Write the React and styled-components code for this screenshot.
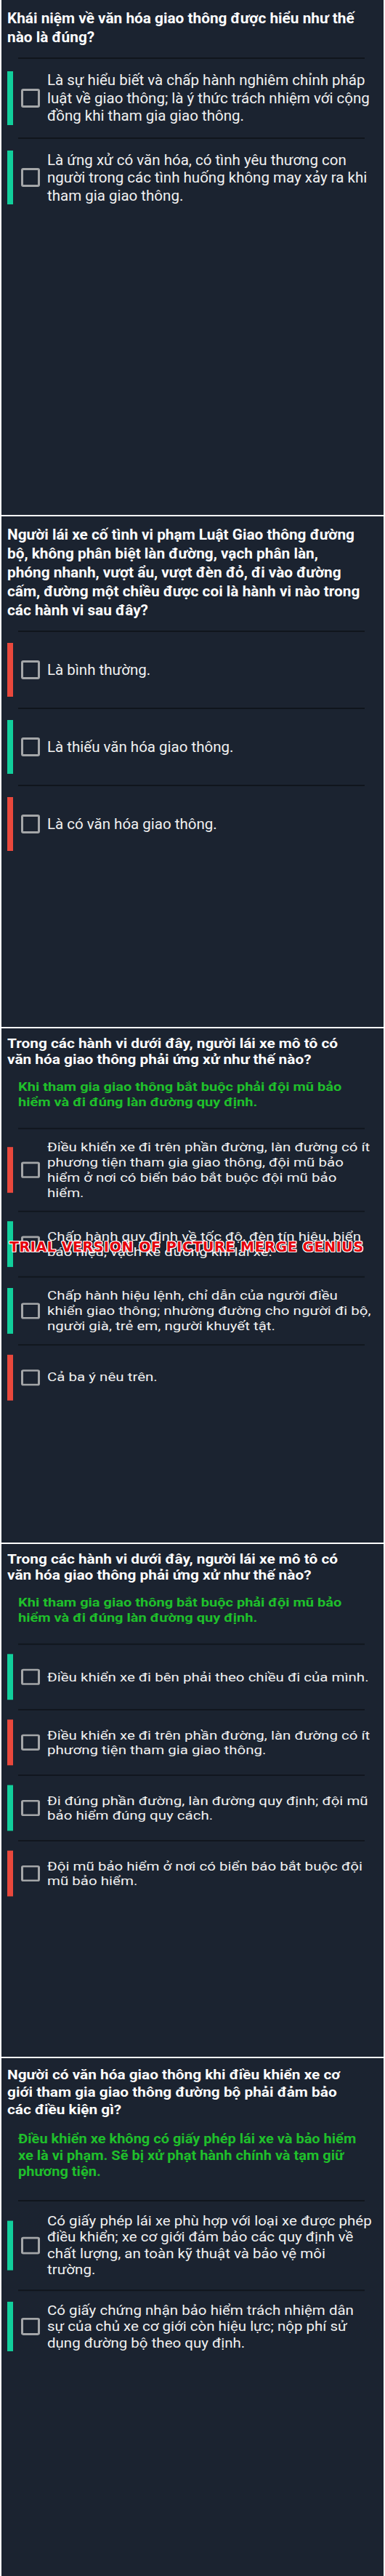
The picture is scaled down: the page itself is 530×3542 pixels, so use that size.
import React from "react";
import styled, { createGlobalStyle } from "styled-components";

const GREEN = "#11cf9b";
const RED = "#e9483c";

const panels = [
  {
    height: 708,
    scale: 1,
    question: [
      "Khái niệm về văn hóa giao thông được hiểu như thế",
      "nào là đúng?",
    ],
    options: [
      {
        ok: true,
        lines: [
          "Là sự hiểu biết và chấp hành nghiêm chỉnh pháp",
          "luật về giao thông; là ý thức trách nhiệm với cộng",
          "đồng khi tham gia giao thông.",
        ],
      },
      {
        ok: true,
        lines: [
          "Là ứng xử có văn hóa, có tình yêu thương con",
          "người trong các tình huống không may xảy ra khi",
          "tham gia giao thông.",
        ],
      },
    ],
  },
  {
    height: 702,
    scale: 1,
    question: [
      "Người lái xe cố tình vi phạm Luật Giao thông đường",
      "bộ, không phân biệt làn đường, vạch phân làn,",
      "phóng nhanh, vượt ẩu, vượt đèn đỏ, đi vào đường",
      "cấm, đường một chiều được coi là hành vi nào trong",
      "các hành vi sau đây?",
    ],
    options: [
      { ok: false, lines: ["Là bình thường."] },
      { ok: true, lines: ["Là thiếu văn hóa giao thông."] },
      { ok: false, lines: ["Là có văn hóa giao thông."] },
    ],
  },
  {
    height: 707,
    scale: 0.85,
    watermark: true,
    question: [
      "Trong các hành vi dưới đây, người lái xe mô tô có",
      "văn hóa giao thông phải ứng xử như thế nào?",
    ],
    hint: [
      "Khi tham gia giao thông bắt buộc phải đội mũ bảo",
      "hiểm và đi đúng làn đường quy định.",
    ],
    options: [
      {
        ok: false,
        lines: [
          "Điều khiển xe đi trên phần đường, làn đường có ít",
          "phương tiện tham gia giao thông, đội mũ bảo",
          "hiểm ở nơi có biển báo bắt buộc đội mũ bảo",
          "hiểm.",
        ],
      },
      {
        ok: true,
        lines: [
          "Chấp hành quy định về tốc độ, đèn tín hiệu, biển",
          "báo hiệu, vạch kẻ đường khi lái xe.",
        ],
      },
      {
        ok: true,
        lines: [
          "Chấp hành hiệu lệnh, chỉ dẫn của người điều",
          "khiển giao thông; nhường đường cho người đi bộ,",
          "người già, trẻ em, người khuyết tật.",
        ],
      },
      { ok: false, lines: ["Cả ba ý nêu trên."] },
    ],
  },
  {
    height: 705,
    scale: 0.85,
    question: [
      "Trong các hành vi dưới đây, người lái xe mô tô có",
      "văn hóa giao thông phải ứng xử như thế nào?",
    ],
    hint: [
      "Khi tham gia giao thông bắt buộc phải đội mũ bảo",
      "hiểm và đi đúng làn đường quy định.",
    ],
    options: [
      { ok: true, lines: ["Điều khiển xe đi bên phải theo chiều đi của mình."] },
      {
        ok: false,
        lines: [
          "Điều khiển xe đi trên phần đường, làn đường có ít",
          "phương tiện tham gia giao thông.",
        ],
      },
      {
        ok: true,
        lines: [
          "Đi đúng phần đường, làn đường quy định; đội mũ",
          "bảo hiểm đúng quy cách.",
        ],
      },
      {
        ok: false,
        lines: [
          "Đội mũ bảo hiểm ở nơi có biển báo bắt buộc đội",
          "mũ bảo hiểm.",
        ],
      },
    ],
  },
  {
    height: 712,
    scale: 0.92,
    question: [
      "Người có văn hóa giao thông khi điều khiển xe cơ",
      "giới tham gia giao thông đường bộ phải đảm bảo",
      "các điều kiện gì?",
    ],
    hint: [
      "Điều khiển xe không có giấy phép lái xe và bảo hiểm",
      "xe là vi phạm. Sẽ bị xử phạt hành chính và tạm giữ",
      "phương tiện.",
    ],
    options: [
      {
        ok: true,
        lines: [
          "Có giấy phép lái xe phù hợp với loại xe được phép",
          "điều khiển; xe cơ giới đảm bảo các quy định về",
          "chất lượng, an toàn kỹ thuật và bảo vệ môi",
          "trường.",
        ],
      },
      {
        ok: true,
        lines: [
          "Có giấy chứng nhận bảo hiểm trách nhiệm dân",
          "sự của chủ xe cơ giới còn hiệu lực; nộp phí sử",
          "dụng đường bộ theo quy định.",
        ],
      },
    ],
  },
];

const GlobalStyle = createGlobalStyle`
  body {
    margin: 0;
    background: #ffffff;
    font-family: Roboto, "Noto Sans", sans-serif;
  }
`;

const Page = styled.main`
  display: flex;
  flex-direction: column;
  gap: 2px;
  padding: 0 2px;
`;

const Panel = styled.section`
  position: relative;
  height: ${(p) => p.$height}px;
  background: #1b2330;
  overflow: hidden;
`;

const Content = styled.div`
  padding-top: 12px;
  transform: scaleY(${(p) => p.$scale});
  transform-origin: top left;
`;

const Question = styled.h2`
  margin: 0;
  padding: 0 8px;
  font-size: 20.8px;
  line-height: 26px;
  font-weight: 700;
  color: #ffffff;
  white-space: nowrap;
`;

const Hint = styled.p`
  margin: 18px 0 0;
  padding-left: 23px;
  font-size: 20px;
  line-height: 24.5px;
  font-weight: 700;
  color: #1fc02b;
  white-space: nowrap;
`;

const Divider = styled.div`
  height: 2px;
  margin: ${(p) => (p.$first ? (p.$afterHint ? "30px" : "15px") : "0")} 26px 0 23px;
  background: #10151c;
`;

const Row = styled.div`
  display: flex;
  align-items: center;
  padding: 15px 0;
`;

const Bar = styled.span`
  flex-shrink: 0;
  width: 8px;
  height: 74px;
  margin-left: 8px;
  background: ${(p) => (p.$ok ? GREEN : RED)};
`;

const Check = styled.span`
  flex-shrink: 0;
  box-sizing: border-box;
  width: 26px;
  height: 26px;
  margin-left: 11px;
  border: 3px solid #a4a6a8;
  border-radius: 3px;
`;

const Answer = styled.p`
  margin: 0 0 0 10px;
  padding: 2px 0;
  font-size: 20.5px;
  line-height: 24.5px;
  font-weight: 400;
  color: #f1f1f1;
  white-space: nowrap;
`;

const Watermark = styled.div`
  position: absolute;
  top: 290px;
  left: 11px;
  font-family: "DejaVu Sans", sans-serif;
  font-weight: 700;
  font-size: 19px;
  line-height: 20px;
  letter-spacing: 0.6px;
  color: #e6000c;
  white-space: nowrap;
  text-shadow: 1px 0 0 #fff, -1px 0 0 #fff, 0 1px 0 #fff, 0 -1px 0 #fff,
    1px 1px 0 #fff, -1px -1px 0 #fff, 1px -1px 0 #fff, -1px 1px 0 #fff;
`;

const withBreaks = (lines) =>
  lines.map((line, i) => (
    <React.Fragment key={i}>
      {i > 0 && <br />}
      {line}
    </React.Fragment>
  ));

const QuizPanel = ({ panel }) => (
  <Panel $height={panel.height}>
    <Content $scale={panel.scale}>
      <Question>{withBreaks(panel.question)}</Question>
      {panel.hint && <Hint>{withBreaks(panel.hint)}</Hint>}
      {panel.options.map((opt, i) => (
        <React.Fragment key={i}>
          <Divider $first={i === 0} $afterHint={!!panel.hint} />
          <Row>
            <Bar $ok={opt.ok} />
            <Check />
            <Answer>{withBreaks(opt.lines)}</Answer>
          </Row>
        </React.Fragment>
      ))}
    </Content>
    {panel.watermark && (
      <Watermark>TRIAL VERSION OF PICTURE MERGE GENIUS</Watermark>
    )}
  </Panel>
);

const App = () => (
  <>
    <GlobalStyle />
    <Page>
      {panels.map((panel, i) => (
        <QuizPanel key={i} panel={panel} />
      ))}
    </Page>
  </>
);

export default App;
